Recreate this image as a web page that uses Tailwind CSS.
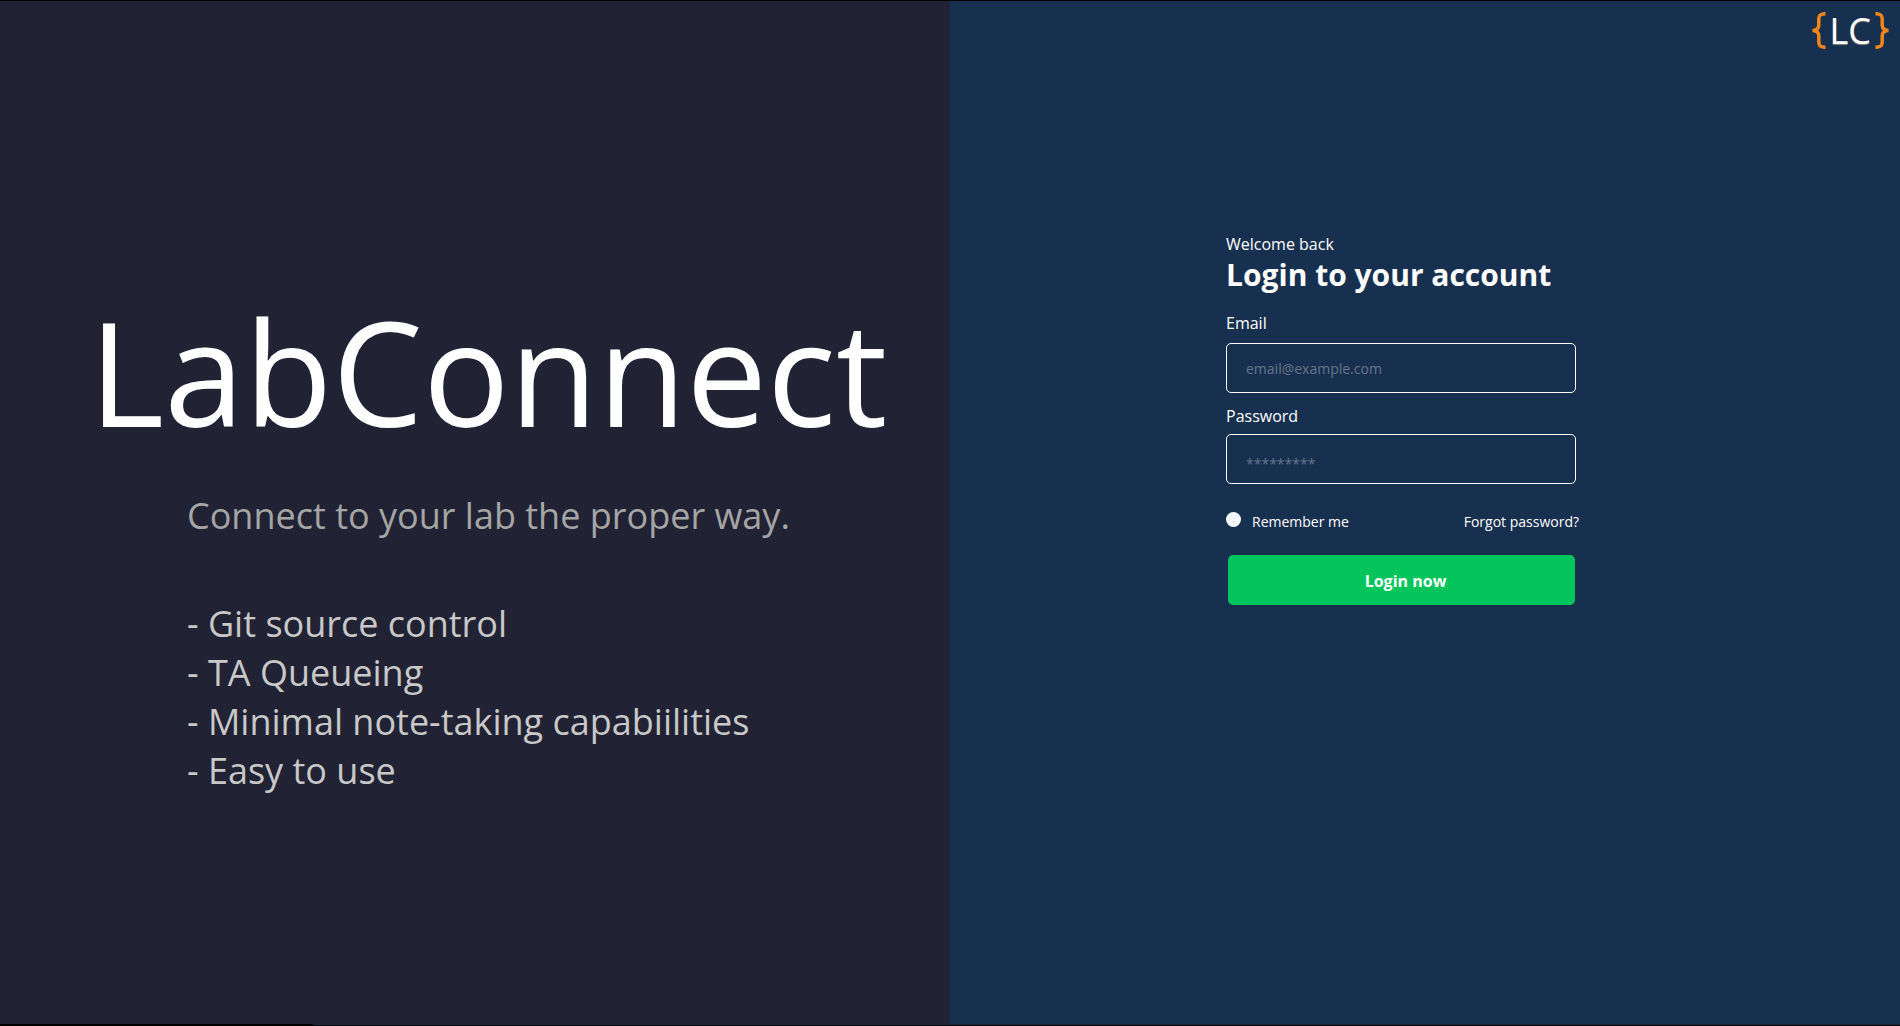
<!DOCTYPE html>
<html lang="en">
<head>
<meta charset="utf-8">
<meta name="viewport" content="width=device-width, initial-scale=1">
<title>LabConnect</title>
<script src="https://cdn.jsdelivr.net/npm/@tailwindcss/browser@4"></script>
</head>
<body class="flex min-h-screen flex-col border-t border-black bg-[#212234] font-['Open_Sans',sans-serif] text-white">
  <main class="grid flex-1 grid-cols-2">
    <section class="bg-[#212234] pt-[272px] pl-[89px]">
      <h1 class="text-[144px] leading-[196px]">LabConnect</h1>
      <div class="pl-[98px] text-4xl leading-[49px]">
        <p class="mt-[22px] text-[#a5a5a5]">Connect to your lab the proper way.</p>
        <ul class="mt-[59px] text-[#c8c8c8]">
          <li>- Git source control</li>
          <li>- TA Queueing</li>
          <li>- Minimal note-taking capabiilities</li>
          <li>- Easy to use</li>
        </ul>
      </div>
    </section>

    <section class="flex flex-col bg-[#18304f]">
      <header class="flex h-16 justify-end pr-[11px]">
        <a href="#" aria-label="LabConnect home" class="flex items-start gap-1 text-4xl leading-[60px]">
          <svg class="mt-[11px] h-[37px] w-[14px]" viewBox="0 0 14 37" fill="none" stroke="#f08519" stroke-width="3.5" aria-hidden="true"><path d="M13.5 1.7C8.5 1.7 6.8 3 6.8 7V13C6.8 16.5 5 18.3 .5 18.5C5 18.7 6.8 20.5 6.8 24V30C6.8 34 8.5 35.3 13.5 35.3"/></svg>
          <span class="[text-shadow:0_1px_1px_#8a8378]">LC</span>
          <svg class="mt-[11px] h-[37px] w-[14px]" viewBox="0 0 14 37" fill="none" stroke="#f08519" stroke-width="3.5" aria-hidden="true"><path d="M.5 1.7C5.5 1.7 7.2 3 7.2 7V13C7.2 16.5 9 18.3 13.5 18.5C9 18.7 7.2 20.5 7.2 24V30C7.2 34 5.5 35.3 .5 35.3"/></svg>
        </a>
      </header>

      <form class="mx-auto mt-[167px] w-[398px] pr-[45px]">
        <p class="leading-6">Welcome back</p>
        <h2 class="text-3xl leading-[38px] font-bold whitespace-nowrap">Login to your account</h2>

        <div class="mr-[3px]">
          <label for="email" class="mt-[17px] block leading-6">Email</label>
          <input id="email" type="email" placeholder="email@example.com" class="mt-2 block h-[50px] w-full rounded-[5px] border border-white bg-transparent px-[19px] text-sm placeholder:text-[#66758a]">
          <label for="password" class="mt-[11px] block leading-6">Password</label>
          <input id="password" type="password" placeholder="*********" class="mt-[6px] block h-[50px] w-full rounded-[5px] border border-white bg-transparent px-[19px] pt-2 text-sm placeholder:text-[#66758a]">
        </div>

        <div class="mt-7 flex justify-between text-sm leading-5">
          <label class="flex items-start gap-[11px]">
            <input type="checkbox" class="size-[15px] appearance-none rounded-full bg-[#f5f9fd]">
            Remember me
          </label>
          <a href="#">Forgot password?</a>
        </div>

        <div class="mt-[23px] mr-1 ml-0.5">
          <button type="submit" class="h-[50px] w-full rounded-[5px] bg-[#04c55c] pt-0.5 pl-2 font-bold">Login now</button>
        </div>
      </form>
    </section>
  </main>
  <footer class="flex h-0.5 bg-black">
    <div class="ml-[313px] h-px flex-1 bg-[#18283f]"></div>
  </footer>
</body>
</html>
